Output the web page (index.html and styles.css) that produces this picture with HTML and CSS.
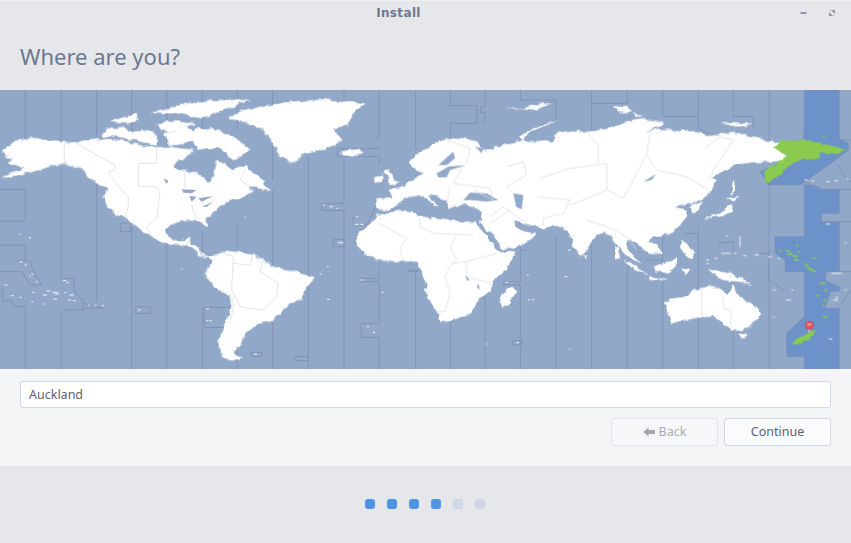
FILE: index.html
```html
<!DOCTYPE html>
<html lang="en">
<head>
<meta charset="utf-8">
<title>Install</title>
<link rel="stylesheet" href="styles.css">
</head>
<body>
<div class="window">
  <header class="head">
    <div class="titlebar">
      <span class="title">Install</span>
      <div class="controls">
        <svg class="ctl" viewBox="0 0 8 8"><rect x="0.5" y="3" width="6" height="2" fill="#8e96a4"/></svg>
        <svg class="ctl" viewBox="0 0 8 8"><path d="M3 1h4v4zM1 3l4 4H1z" fill="#8e96a4"/><path d="M1 1h2L1 3zM7 7H5l2-2z" fill="#c4c8d0"/></svg>
      </div>
    </div>
    <h1 class="heading">Where are you?</h1>
  </header>

  <svg class="map" viewBox="0 0 2553 837" aria-label="World time zone map">
    <defs>
      <filter id="rough" x="0" y="0" width="100%" height="100%" filterUnits="userSpaceOnUse" primitiveUnits="userSpaceOnUse">
        <feTurbulence type="fractalNoise" baseFrequency="0.045" numOctaves="3" seed="4" result="noise"/>
        <feDisplacementMap in="SourceGraphic" in2="noise" scale="16" xChannelSelector="R" yChannelSelector="G"/>
      </filter>
    </defs>
    <rect class="sea" width="2553" height="837"/>
    <g transform="translate(1710)">
      <path class="band" d="M703 0H808V145L835 160V180L790 215L690 285H595L570 245L640 215L700 150L703 100ZM703 285H735L755 298H808V370H755V395H808V545H767V572L808 590V603L782 605L765 655H808V837H703V800H650V730L703 680V545H645V510L615 490V440H703Z"/>
    </g>
    <g class="zones">
      <path d="M75 0V235M0 298H75V393H0M0 465H75V512M52 512H90L100 545L125 585H90L65 545H0M0 595H8V632H38L40 650H75V837M183 0V150M183 225V565H222V600L250 635V660H200L183 670V837M290 0V140M290 260V635M250 640L310 655H250M395 0V837M500 0V837M607 0V150M607 420V490M607 652V837M712 0V120M712 400V837M818 0V270M818 300V837"/>
      <path d="M362 400H392V425H362ZM405 650H452V670H405ZM613 652H690V712H613ZM755 787H785V799H755Z"/>
      <g transform="translate(870)">
        <path d="M55 200V837M162 0V100M162 190V340H95V362H162V837M268 0V140L255 145M142 175H268M142 175V200H268V225M190 380V405H232L262 335M130 448H162V470H130ZM268 420V450M268 530V565H210V575H268V700H213V742H268V837M15 800H55V812H15ZM377 0V180M377 540V837M355 540H385V544H355ZM481 0V47H560V100H481V145M481 690V837M585 0V50H572V68H585V100M585 560V837M691 0V30H798V100M691 470V480H710M691 485V575H640V585H691V837M668 752H697V765H668ZM798 440V837"/>
      </g>
      <g transform="translate(1710)">
        <path d="M65 0V120M65 440V837M65 40H172V0M172 510V837M278 0V80H385V0M385 80V115L415 130M278 510H225M278 430V837M385 410V837M340 430H385V445M490 0V80H550V120M445 480L445 460L490 455V500M490 700V837M597 0V150M597 285V837M570 490H597V570L640 600M808 400V545M755 395H843M808 150H843M800 220L830 270L843 275M700 275L760 298H843M765 545H843M808 650L843 600"/>
      </g>
    </g>

    <g class="land" filter="url(#rough)">
      <!-- Americas and Arctic Canada -->
      <path d="M5 182L30 165L45 152L70 150L90 141L130 148L193 155L225 158L250 152L300 147L340 148L385 155L420 165L470 172L510 170L540 175L580 178L575 190L555 205L530 215L520 230L540 240L575 245L600 252L615 275L630 278L640 255L645 225L655 212L680 225L700 235L725 228L740 225L760 250L795 270L790 285L815 305L790 300L770 290L745 290L760 305L725 325L690 330L660 345L645 365L620 385L622 415L605 395L570 392L540 395L510 405L498 420L505 440L525 452L550 450L570 440L570 460L590 470L605 492L625 498L640 495L660 490L680 482L720 487L760 495L790 510L820 530L870 540L895 548L945 565L920 590L905 625L870 640L850 660L820 690L790 695L760 715L735 735L720 765L700 790L730 805L695 815L665 800L655 760L665 725L680 690L695 650L690 620L665 605L640 590L620 560L618 540L640 510L625 502L600 497L585 480L555 465L510 462L470 450L445 435L415 415L380 385L350 375L325 350L312 320L322 295L295 280L265 262L250 240L220 228L190 220L150 230L100 245L50 255L5 265L30 248L75 235L45 225L25 218L40 205L15 200Z"/>
      <path d="M305 140L318 112L375 115L405 125L445 120L470 135L470 165L420 155L350 140ZM330 95L360 85L410 72L415 90L380 100L345 100ZM450 68L490 60L520 50L570 38L640 30L750 30L710 45L680 55L640 70L600 85L560 75L520 70L470 70ZM470 100L530 90L590 100L560 115L510 125L480 120ZM490 130L560 115L590 130L580 150L530 165L510 165L500 145ZM580 115L640 115L700 140L750 180L720 200L695 210L660 175L620 175L590 180L580 160Z"/>
      <path d="M680 85L730 60L790 48L870 35L970 28L1100 40L1065 60L1050 85L1045 105L1000 115L1030 150L970 180L930 185L900 200L880 220L870 218L840 200L825 170L810 150L790 120L740 95Z"/>
      <!-- Europe, Asia, Africa, Australia -->
      <g transform="translate(870)">
        <path d="M360 215L370 205L400 180L430 160L460 150L490 143L530 145L560 155L570 170L585 180L610 175L605 165L630 175L640 165L670 160L700 150L730 155L770 150L785 155L795 135L810 125L840 125L895 125L960 115L990 100L1050 85L1120 95L1110 110L1070 120L1130 118L1190 122L1240 130L1260 138L1310 130L1340 128L1400 145L1445 155L1480 160L1490 195L1480 212L1440 215L1380 218L1330 225L1290 250L1265 262L1280 270L1265 300L1245 320L1210 340L1170 345L1158 352L1185 358L1190 380L1175 400L1150 425L1115 437L1090 440L1075 450L1102 465L1120 490L1080 492L1055 475L1035 455L1015 450L1010 470L1025 490L1055 525L1005 490L985 470L970 450L945 425L920 435L895 465L880 497L865 490L850 470L840 435L820 415L790 405L760 415L720 405L690 395L670 390L680 410L700 425L742 430L720 450L690 465L640 478L632 465L612 440L595 425L570 398L575 370L565 358L530 345L490 350L480 355L470 335L440 315L410 313L425 330L445 345L440 352L420 335L400 320L375 318L345 325L325 340L300 358L275 362L258 352L260 328L310 322L295 303L320 295L345 285L375 265L385 260L400 250L380 240L362 222Z"/>
        <path d="M285 240L300 235L305 260L330 280L295 285L295 260L280 245ZM250 265L280 255L275 275L255 278ZM150 185L175 180L200 178L225 185L190 200L160 195ZM690 135L740 110L810 90L770 105L720 125L700 150Z"/>
        <path d="M260 375L300 368L340 360L365 368L400 380L430 385L470 390L558 398L622 480L635 487L680 482L665 510L650 530L610 575L605 605L565 625L555 650L540 670L490 690L455 697L440 665L415 625L405 600L410 585L405 570L385 530L385 515L330 515L265 510L225 490L200 465L205 430L230 410L250 395ZM670 590L678 605L655 650L635 650L630 625L650 600Z"/>
        <path d="M645 50L700 55L740 42L785 40L740 58L670 55Z"/>
      </g>
      <g transform="translate(1710)">
        <path d="M285 640L300 630L345 620L370 600L390 600L398 590L440 588L460 605L470 610L490 585L505 615L530 635L565 655L570 675L540 710L515 720L480 718L455 695L430 680L390 682L350 690L305 700L295 680ZM505 732L530 730L525 745L512 745Z"/>
        <path d="M130 50L170 48L185 65L150 68ZM190 70L225 75L195 78ZM450 100L500 97L550 105L500 110ZM360 348L395 335L385 365L370 370ZM400 385L440 372L480 345L490 365L450 378L410 385ZM470 325L510 318L490 335ZM490 270L497 285L488 312L482 312ZM160 510L200 530L235 555L190 535ZM235 560L300 572L240 570ZM255 530L290 515L322 505L320 525L295 550L260 545ZM335 450L350 460L375 495L365 505L345 490L330 470ZM330 540L360 535L345 555ZM410 540L440 540L480 548L510 565L545 582L505 575L470 572L440 558ZM135 470L148 475L148 505L135 505ZM40 495L58 498L50 507Z"/>
      </g>
    </g>
    <!-- Inland water -->
    <g class="water">
      <path d="M490 265L505 272L500 282ZM545 298L590 300L575 310L550 308ZM568 318L590 320L575 335ZM595 325L640 318L605 335ZM605 350L640 335L620 350ZM380 385L415 425L408 425L378 392Z"/>
      <g transform="translate(870)">
        <path d="M520 330L540 308L590 310L625 330L590 335L545 330ZM670 310L700 315L695 358L678 350ZM440 250L475 230L530 225L480 240L470 262L445 262ZM445 225L490 185L495 205L470 225ZM555 170L580 175L575 190ZM525 555L540 572L530 570ZM565 580L570 600L560 590Z"/>
      </g>
      <g transform="translate(1710)">
        <path d="M220 275L258 252L245 270Z"/>
      </g>
    </g>
    <!-- Country and state borders -->
    <g class="borders">
      <path d="M193 155V220L245 235M230 160L290 195L345 225V240L325 245L355 290L385 320L385 350L375 385M470 172V220H415V290H470L480 310L470 385L440 410L455 440M555 240V295M575 345L590 390M550 470L570 450M670 490L700 500L695 600L720 650L790 660L830 620L835 580L780 545L790 510L760 490L750 525L700 520M735 240L720 270L750 290M695 620L700 650L690 700"/>
      <g transform="translate(870)">
        <path d="M470 150L540 175L530 220M480 290L470 340M520 225L490 280L600 295L610 330L550 300M650 230L700 215L710 255L650 290L670 310M750 265L840 235M745 320L840 330L820 370L760 385L760 410M265 400L350 445L330 475L340 515M390 385L390 410L430 430L550 435M480 470L500 435M480 470L500 510L480 530L465 560L480 610L465 665L440 665M480 520L530 515L530 560L600 580M530 515L620 490M600 380L640 350L700 395M660 360L600 400"/>
      </g>
      <g transform="translate(1710)">
        <path d="M0 235L110 220L110 300L160 325L230 195L260 240L350 260L415 300M50 125L85 165L85 220M240 130L230 195M260 130L290 115M405 175L450 140L490 150L415 265M0 345L50 325L110 300M50 390L110 410L130 420M130 415L175 445M175 445L200 480M395 590V680M460 620V655L483 660V715M480 540V570"/>
      </g>
    </g>
    <!-- Small islands -->
    <g class="isles">
      <path d="M60 433h2M88 443h4M60 515h6M75 525h4M95 552h4M88 558h3M110 575h4M190 572h8M200 578h5M15 585h6M98 607h4M140 603h10M158 607h14M130 615h10M165 612h12M195 608h3M210 615h10M35 617h5M60 622h3M162 627h8M205 630h6M95 635h3M130 642h3M220 632h6M265 645h3M285 647h3M308 647h3M415 660h5M620 656h6M620 692h4M630 692h4M762 792h8M735 382h2M545 537h2"/>
      <g transform="translate(870)">
        <path d="M100 345h2M120 350h8M140 355h2M195 403h10M212 403h8M200 380h3M145 458h14M112 530h3M90 552h3M212 570h5M277 607h3M112 628h6M232 710h4M250 727h4M712 555h3M648 577h5M715 630h4M728 628h3M588 762h2M680 758h6M838 778h2M825 560h6M835 480h6"/>
      </g>
      <g transform="translate(1710)">
        <path d="M470 437h3M510 440v30M455 490h25M410 510h6M435 505h5M490 490h8M520 497h8M555 495h10M595 500h8M625 505h3M410 520h6M610 600h6M650 630h12M665 600h4M610 682h3M770 402h10M785 550h30M790 630h8M800 620v12M825 600h3M778 747h8M825 458h3M705 270h6M725 273h6M770 275h8M795 272h8M830 268h5"/>
      </g>
    </g>
    <!-- Selected time zone land -->
    <g class="green" transform="translate(1710)">
      <g filter="url(#rough)">
        <path d="M605 170L640 152L690 150L750 158L790 168L830 180L795 190L750 190L748 207L700 205L665 222L650 230L625 260L590 280L583 250L600 230L640 210L650 195Z"/>
        <path d="M748 140L772 138L760 143ZM662 760L700 735L720 730L745 715L730 735L695 760L670 762Z"/>
      </g>
      <path class="green-dots" d="M628 483h4M650 483h8M680 466h3M655 492h10M670 498h10M685 485h4M675 510h8M730 505h8M705 520l12 15 18 10M750 580h15M740 617h6M765 600h4M762 632h4M760 680h10M760 645h2"/>
    </g>
    <!-- Location pin -->
    <g class="pin">
      <rect class="pin-stem" x="2425" y="712" width="5" height="16"/>
      <circle class="pin-head" cx="2428" cy="706" r="12"/>
      <rect class="pin-shine" x="2421" y="700" width="14" height="6" rx="3"/>
    </g>
  </svg>

  <section class="panel">
    <input class="field" type="text" value="Auckland" aria-label="Time zone">
    <div class="actions">
      <button class="btn btn-off" type="button">
        <svg class="arrow" viewBox="0 0 12 10"><path d="M0 5L5.500 0.500V3H12V7H5.500V9.500Z" fill="#a3a7ad"/></svg>Back
      </button>
      <button class="btn" type="button">Continue</button>
    </div>
  </section>

  <footer class="steps">
    <span class="dot on"></span><span class="dot on"></span><span class="dot on"></span><span class="dot on"></span><span class="dot"></span><span class="dot"></span>
  </footer>
</div>
</body>
</html>
```

FILE: styles.css
```css
* { box-sizing: border-box; }
html, body { margin: 0; height: 100%; overflow: hidden; }
body { background: #e6e7eb; font-family: "Noto Sans", sans-serif; color: #5d6271; }
.window { width: 851px; height: 543px; display: flex; flex-direction: column; }

.head { height: 90px; background: #e6e7eb; border-top: 1px solid #eff0f2; flex: none; }
.titlebar { height: 24px; display: flex; align-items: center; justify-content: center; padding-right: 54px; position: relative; }
.title { font-family: "DejaVu Sans", sans-serif; font-weight: bold; font-size: 12px; letter-spacing: 0.35px; color: #70778a; }
.controls { position: absolute; right: 15px; top: 8px; display: flex; gap: 20px; }
.ctl { width: 8px; height: 8px; display: block; }
.heading { margin: 0; padding: 15px 0 0 20px; font-weight: normal; font-size: 22px; line-height: 32px; color: #6b7890; }

.map { display: block; width: 851px; height: 279px; flex: none; filter: blur(0.35px); }
.sea { fill: #92a8c9; }
.band { fill: #6d92c9; stroke: #7b8fb3; stroke-width: 2; }
.zones { fill: none; stroke: #8094b6; stroke-width: 3; }
.land { fill: #fff; }
.water { fill: #92a8c9; }
.borders { fill: none; stroke: #dcdfe3; stroke-width: 2.5; }
.isles { fill: none; stroke: #f2f4f7; stroke-width: 3; stroke-linecap: round; }
.green { fill: #8acb50; }
.green-dots { fill: none; stroke: #8acb50; stroke-width: 5; stroke-linecap: round; }
.pin-stem { fill: #c9ccd2; }
.pin-head { fill: #e9545f; stroke: #c9414d; stroke-width: 2; }
.pin-shine { fill: #f29aa0; }

.panel { height: 97px; background: #f4f5f7; padding: 12px 20px 0; flex: none; display: flex; flex-direction: column; gap: 10px; }
.field { width: 100%; height: 27px; background: #fff; border: 1px solid #cfd7e8; border-radius: 3px; padding: 0 8px 1px; font: 12.500px "Noto Sans", sans-serif; color: #5d6271; outline: none; }
.actions { display: flex; justify-content: flex-end; gap: 6px; }
.btn { width: 107px; height: 28px; display: flex; align-items: center; justify-content: center; gap: 4px; padding: 0 0 1px; background: #fafbfc; border: 1px solid #cfd7e8; border-radius: 3px; font: 12.500px "Noto Sans", sans-serif; color: #5d6271; }
.btn-off { background: #f6f7f8; border-color: #e1e4ea; color: #a9adb4; }
.arrow { width: 12px; height: 10px; display: block; }

.steps { flex: 1; background: #e6e7eb; display: flex; justify-content: center; gap: 12px; padding: 33px 2px 0 0; }
.dot { width: 10px; height: 10px; border-radius: 3px; background: #d0d8e8; }
.dot.on { background: #4f93e4; }
```
